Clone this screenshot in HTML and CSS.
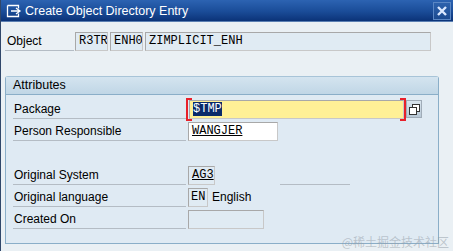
FILE: index.html
```html
<!DOCTYPE html>
<html lang="en">
<head>
    <meta charset="UTF-8">
    <meta name="viewport" content="width=device-width, initial-scale=1.0">
    <title>Create Object Directory Entry</title>
    <link rel="stylesheet" href="styles.css">
</head>
<body>
    <div class="window">
        <div class="titlebar">
            <svg class="title-icon" width="16" height="14" viewBox="0 0 16 14">
                <path d="M1.5 1.5h11v3M1.5 1.5v11h11v-3" fill="none" stroke="#fff" stroke-width="1.3"/>
                <path d="M5 7h9M10 4l4 3-4 3" fill="none" stroke="#fff" stroke-width="1.3"/>
            </svg>
            <span class="title-text">Create Object Directory Entry</span>
            <div class="close-btn">
                <svg width="12" height="12" viewBox="0 0 12 12">
                    <path d="M2 2l8 8M10 2l-8 8" stroke="#dbe8ff" stroke-width="2.4"/>
                </svg>
            </div>
        </div>

        <div class="content">
            <div class="object-row">
                <div class="object-label">Object</div>
                <div class="field ro w-pgm">R3TR</div>
                <div class="field ro w-obj">ENH0</div>
                <div class="field ro w-name">ZIMPLICIT_ENH</div>
            </div>

            <div class="group">
                <div class="group-head">Attributes</div>
                <div class="group-body">
                    <div class="row">
                        <div class="label">Package</div>
                        <div class="focus-wrap">
                            <div class="field required w-package"><span class="selected">$TMP</span></div>
                        </div>
                        <div class="f4-btn">
                            <svg width="13" height="13" viewBox="0 0 13 13">
                                <rect x="4.5" y="1.5" width="7" height="7" fill="#fff" stroke="#333"/>
                                <rect x="1.5" y="4.5" width="7" height="7" fill="#fff" stroke="#333"/>
                            </svg>
                        </div>
                    </div>
                    <div class="row">
                        <div class="label">Person Responsible</div>
                        <div class="field input w-person"><u>WANGJER</u></div>
                    </div>
                    <div class="row empty"></div>
                    <div class="row">
                        <div class="label">Original System</div>
                        <div class="field ro w-sys"><u>AG3</u></div>
                        <div class="sys-line"></div>
                    </div>
                    <div class="row">
                        <div class="label">Original language</div>
                        <div class="field ro w-lang">EN</div>
                        <span class="lang-text">English</span>
                    </div>
                    <div class="row">
                        <div class="label">Created On</div>
                        <div class="field ro w-date"></div>
                    </div>
                </div>
            </div>
        </div>
        <div class="watermark">@稀土掘金技术社区</div>
    </div>
</body>
</html>
```

FILE: styles.css
```css
body {
    margin: 0;
    font-family: "Liberation Sans", Arial, sans-serif;
    font-size: 12px;
    color: #000;
    background: #eaf0f4;
}
.window {
    position: relative;
    width: 453px;
    height: 251px;
    overflow: hidden;
    background: #eaf0f4;
    border-left: 1px solid #30476a;
    box-sizing: border-box;
}
.titlebar {
    height: 22px;
    display: flex;
    align-items: center;
    background: linear-gradient(#2c63b2, #1a4c98 55%, #0b3378);
    color: #fff;
    border-bottom: 1px solid #5b7fb2;
    box-sizing: border-box;
}
.title-icon {
    margin: 0 3px 0 5px;
}
.title-text {
    font-size: 12.5px;
    flex: 1;
}
.close-btn {
    width: 18px;
    height: 18px;
    margin-right: 2px;
    display: flex;
    align-items: center;
    justify-content: center;
    background: linear-gradient(#2d62ad, #1b4a90);
    border: 1px solid #5a86c4;
    box-sizing: border-box;
}
.content {
    padding: 9px 0 0 4px;
}
.object-row {
    display: flex;
    align-items: center;
    height: 20px;
}
.object-label {
    width: 69px;
    height: 20px;
    line-height: 21px;
    padding-left: 2px;
    margin-right: 1px;
    border-bottom: 1px solid #b4bcc4;
    box-sizing: border-box;
}
.field {
    height: 19px;
    line-height: 17px;
    padding: 0 3px;
    font-family: "Liberation Mono", monospace;
    font-size: 12px;
    border: 1px solid;
    border-color: #a8a8a8 #c8c8c8 #c8c8c8 #a8a8a8;
    box-sizing: border-box;
    margin-right: 2px;
    white-space: nowrap;
    overflow: hidden;
}
.ro {
    background: #e0ebf3;
}
.input {
    background: #fff;
}
.required {
    background: #fff096;
}
.w-pgm { width: 33px; }
.w-obj { width: 33px; }
.w-name { width: 286px; }
.group {
    margin-top: 25px;
    width: 434px;
    height: 168px;
    border: 1px solid #8aaec8;
    border-top-color: #a8c4d8;
    border-radius: 3px 3px 0 0;
    background: #dfeaf3;
    box-sizing: border-box;
}
.group-head {
    height: 17px;
    line-height: 17px;
    padding-left: 7px;
    font-size: 12.5px;
    background: linear-gradient(#d4e4ef, #c0d6e6);
    border-bottom: 1px solid #8aaec8;
}
.group-body {
    padding: 3px 0 0 7px;
}
.row {
    display: flex;
    align-items: center;
    height: 22px;
}
.label {
    width: 173px;
    height: 21px;
    line-height: 22px;
    margin-right: 2px;
    padding-left: 1px;
    border-bottom: 1px solid #b4bcc4;
    box-sizing: border-box;
    align-self: flex-start;
}
.focus-wrap {
    position: relative;
    padding: 0 1px;
}
.focus-wrap::before,
.focus-wrap::after {
    content: "";
    position: absolute;
    top: -2px;
    bottom: -2px;
    width: 4px;
    border: 2px solid #e8202a;
}
.focus-wrap::before {
    left: -2px;
    border-right: none;
}
.focus-wrap::after {
    right: -1px;
    border-left: none;
}
.focus-wrap .field {
    margin-right: 0;
}
.w-package { width: 215px; }
.selected {
    background: #0a2a6a;
    color: #fff;
}
.f4-btn {
    width: 16px;
    height: 18px;
    margin-left: 1px;
    display: flex;
    align-items: center;
    justify-content: center;
    background: linear-gradient(#d8e4ee, #b8c8d6);
    border: 1px solid #a0acb8;
    box-sizing: border-box;
}
.w-person { width: 90px; }
.w-sys { width: 27px; }
.w-lang { width: 20px; padding: 0 2px; }
.w-date { width: 76px; }
.sys-line {
    width: 70px;
    margin-left: 63px;
    align-self: flex-end;
    margin-bottom: 1px;
    border-bottom: 1px solid #b4bcc4;
}
.lang-text {
    margin-left: 2px;
}
.watermark {
    position: absolute;
    right: 4px;
    bottom: 1px;
    font-family: "Noto Sans CJK SC", sans-serif;
    font-size: 12px;
    color: rgba(150, 160, 170, 0.55);
}
```
